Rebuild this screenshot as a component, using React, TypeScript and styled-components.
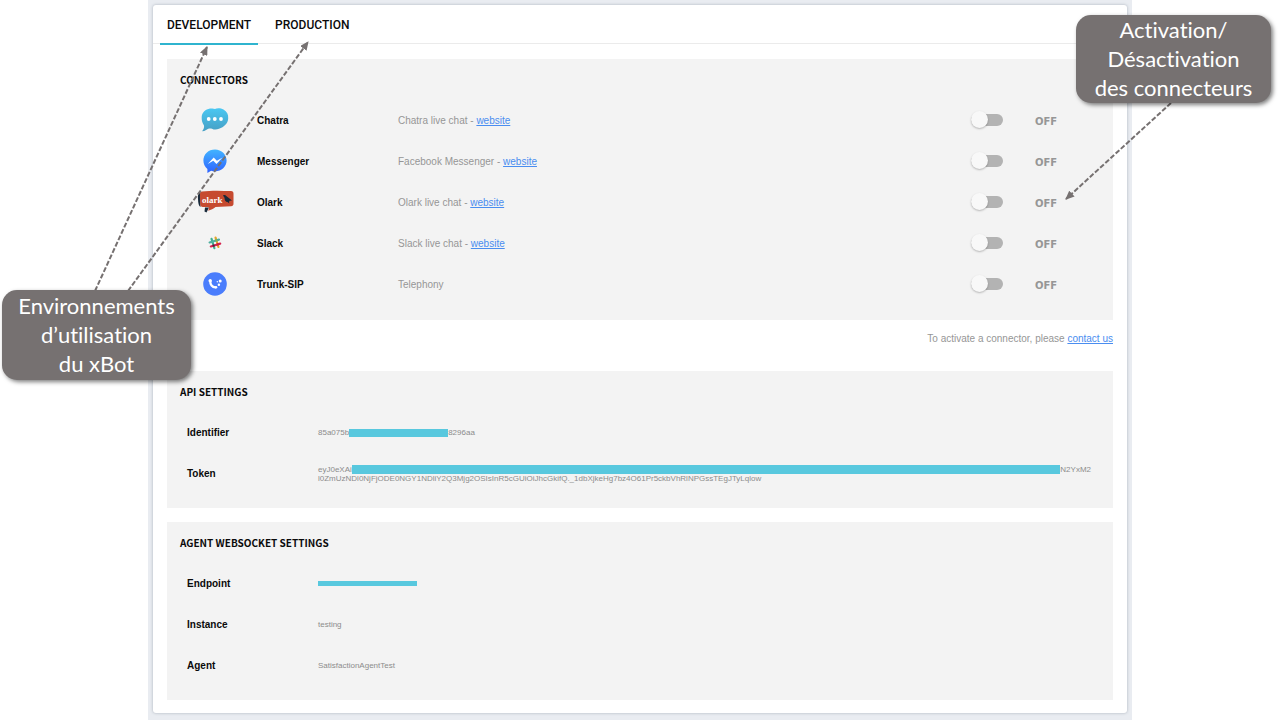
import React from 'react';
import styled, { createGlobalStyle } from 'styled-components';

const GlobalStyle = createGlobalStyle`
  *, *::before, *::after { box-sizing: border-box; }
  body {
    margin: 0;
    background: #fff;
    color: #0a0a0a;
    font-family: "Liberation Sans", Arial, sans-serif;
    font-size: 10px;
  }
`;

const Page = styled.div`
  position: relative;
  min-height: 100vh;
  padding: 0 148px;
`;

const Backdrop = styled.div`
  min-height: 100vh;
  padding: 5px 5px 7px;
  background: #e9ecf1;
`;

const Card = styled.main`
  background: #fff;
  border-radius: 3px;
  box-shadow: 0 0 3px rgba(90, 105, 125, 0.45);
`;

const Tabs = styled.nav`
  display: flex;
  gap: 10px;
  height: 39px;
  padding: 0 7px;
  border-bottom: 1px solid #ebebeb;
`;

const Tab = styled.button<{ $active?: boolean }>`
  height: 40px;
  padding: 2px 7px 0;
  border: 0;
  border-bottom: 2px solid ${(p) => (p.$active ? '#2fb4cf' : 'transparent')};
  background: none;
  color: #0a0a0a;
  font: 500 12px/36px Roboto, sans-serif;
`;

const Content = styled.div`
  display: flex;
  flex-direction: column;
  gap: 14px;
  padding: 15px 14px 13px;
`;

const Panel = styled.section`
  padding-bottom: 14px;
  background: #f3f3f3;
`;

const PanelTitle = styled.h2`
  margin: 0;
  padding-left: 13px;
  font: 700 10px/41px "Noto Sans CJK SC", "Noto Sans", sans-serif;
`;

const ConnectorList = styled.ul`
  margin: 0;
  padding: 0 0 1px;
  list-style: none;
`;

const ConnectorRow = styled.li`
  display: grid;
  grid-template-columns: 90px 141px 1fr 64px 78px;
  align-items: center;
  height: 41px;
`;

const LogoCell = styled.span`
  display: flex;
  justify-content: center;
  padding: 0 0 2px 6px;
`;

const Name = styled.label`
  font-weight: 700;
`;

const Description = styled.span`
  color: #969696;
`;

const Link = styled.a`
  color: #4a8df0;
  text-decoration: underline;
`;

const Switch = styled.input`
  appearance: none;
  display: flex;
  align-items: center;
  width: 32px;
  height: 12px;
  margin: 0 0 2px;
  border-radius: 6px;
  background: #b3b3b3;

  &::before {
    content: "";
    width: 17px;
    height: 17px;
    border-radius: 50%;
    background: #f8f8f8;
    box-shadow: 0 1px 2px rgba(0, 0, 0, 0.25);
  }

  &:checked { justify-content: flex-end; background: #2fb4cf; }
`;

const State = styled.span`
  padding-top: 2px;
  color: #969696;
  font: 700 10px/16px "DejaVu Sans", sans-serif;
`;

const Note = styled.p`
  margin: 0;
  color: #969696;
  line-height: 37px;
  text-align: right;
`;

const Settings = styled.dl`
  margin: 0;
`;

const SettingRow = styled.div`
  display: grid;
  grid-template-columns: 131px 1fr;
  align-items: center;
  height: 41px;
  padding: 0 22px 0 20px;
`;

const Term = styled.dt`
  font-weight: 700;
`;

const Value = styled.dd`
  margin: 0;
  color: #8c8c8c;
  font-size: 8px;
  line-height: 9px;
`;

const Line = styled.div`
  display: flex;
  align-items: center;
`;

const Mask = styled.span<{ $height: number; $fill?: boolean }>`
  flex: ${(p) => (p.$fill ? '1' : '0 0 99px')};
  height: ${(p) => p.$height}px;
  background: #58c8de;
`;

const Callout = styled.aside`
  position: absolute;
  border-radius: 15px;
  background: #767171;
  box-shadow: 2px 2px 4px rgba(0, 0, 0, 0.5);
  color: #fff;
  font: 400 22px/29px Lato, sans-serif;
  font-variant-ligatures: none;
  text-align: center;
`;

const EnvironmentCallout = styled(Callout)`
  top: 290px;
  left: 2px;
  width: 189px;
  padding: 1px 0 2px;
`;

const ActivationCallout = styled(Callout)`
  top: 15px;
  right: 9px;
  width: 195px;
  padding-bottom: 1px;
`;

const Arrows = styled.svg<{ $side: 'left' | 'right' }>`
  position: absolute;
  top: 0;
  ${(p) => p.$side}: 0;
  pointer-events: none;
`;

const ChatraLogo = () => (
  <svg width="28" height="24" viewBox="0 0 28 24" aria-hidden="true">
    <defs>
      <linearGradient id="chatra" x1="0" y1="0" x2="0" y2="1">
        <stop offset="0" stopColor="#49c7f2" />
        <stop offset="1" stopColor="#479fc4" />
      </linearGradient>
    </defs>
    <path
      d="M9 .6C11 .2 13 .4 14 .9 16 .1 20 .1 22.500 1.600 26 3.500 27.500 6.500 27.200 10.500 27 15.500 23 19 18 20.800 15.500 21.800 13 21.800 11 20.700 8.500 20.300 7 20.800 5.500 21.800 4 22.800 2.500 23.300 1 23.300 2.500 21.500 3.400 19.500 3 17.500 1 14.500 .6 12 .7 9 1 4.500 4.500 1.400 9 .6Z"
      fill="url(#chatra)"
    />
    <g fill="#fff">
      <circle cx="7.700" cy="11" r="1.900" />
      <circle cx="13.800" cy="11" r="1.900" />
      <circle cx="20" cy="11" r="1.900" />
    </g>
  </svg>
);

const MessengerLogo = () => (
  <svg width="24" height="24" viewBox="0 0 24 24" aria-hidden="true">
    <defs>
      <linearGradient id="messenger" x1="0" y1="0" x2="0" y2="1">
        <stop offset="0" stopColor="#42b4ff" />
        <stop offset="1" stopColor="#2f63ff" />
      </linearGradient>
    </defs>
    <path
      d="M12 .4C5.400 .4 .4 5.200 .4 11.600c0 3.500 1.500 6.500 4 8.500v3.800l3.700-2.100c1.200.4 2.500.6 3.900.6 6.600 0 11.600-4.800 11.600-10.800S18.600.4 12 .4Z"
      fill="url(#messenger)"
    />
    <path d="M4.700 15 10.700 8.600l3.200 3.100 5.600-3.100-6 6.400-3.200-3.200Z" fill="#fff" />
  </svg>
);

const OlarkLogo = () => (
  <svg width="37" height="23" viewBox="0 0 37 23" aria-hidden="true">
    <path d="M3.500 2C1 3 .8 5 1 9c.1 4 .8 7 2.500 8ZM8 17.500h4l-2.500 5-2-1Z" fill="#18293a" />
    <path
      d="M5 1.500C14 .3 25 .6 34 1.100c1.800.1 2.500 1 2.500 2.600v9.800c0 1.800-.8 2.700-2.500 2.800l-15.500.6c-2 1.800-4.500 3-7.500 3.800.8-1.200 1-2.500.5-3.800H6c-1.800 0-2.700-.8-2.800-2.600L3 4.300C3 2.600 3.600 1.700 5 1.500Z"
      fill="#c64a30"
    />
    <text x="5" y="13" fill="#fff" fontFamily="Liberation Serif, serif" fontSize="9" fontWeight="700">
      olark
    </text>
    <path d="M26 5.500c1.500-.8 2.600-.4 3.300.6L35 10.500l-2.500.2-.5 1.500.4 1.300-1.900-1.400c-2-.4-3-2-3-4.400Z" fill="#18293a" />
  </svg>
);

const SlackLogo = () => (
  <svg width="14" height="14" viewBox="0 0 14 14" aria-hidden="true">
    <g transform="rotate(-17 7 7)" strokeWidth="2.200" strokeLinecap="round">
      <path d="M4.900 2v9.800" stroke="#3db08f" />
      <path d="M9.100 2v9.800" stroke="#e3a62b" />
      <path d="M2 4.900h9.800" stroke="#4fae9f" />
      <path d="M2 9.100h9.800" stroke="#d6234f" />
      <path d="M4.900 9.100v.1" stroke="#45233f" />
      <path d="M9.100 9.100v.1" stroke="#c9243a" />
      <path d="M9.100 4.900v.1" stroke="#8bb04a" />
    </g>
    <path d="M6.300 6.300h1.400v1.400H6.300Z" fill="#f3f3f3" />
  </svg>
);

const TrunkLogo = () => (
  <svg width="24" height="24" viewBox="0 0 24 24" aria-hidden="true">
    <circle cx="12" cy="12" r="11.800" fill="#4a7dfc" />
    <path
      d="M7.300 9C7 12.500 9.300 15.300 12.300 15.400"
      fill="none"
      stroke="#fff"
      strokeWidth="2.200"
      strokeLinecap="round"
    />
    <circle cx="7.200" cy="8.800" r="1.700" fill="#fff" />
    <circle cx="13" cy="15.200" r="1.300" fill="#fff" />
    <circle cx="15.900" cy="12.800" r="1.200" fill="#fff" />
    <circle cx="17.200" cy="9" r="1.500" fill="#fff" />
    <circle cx="14.300" cy="9.800" r=".7" fill="#fff" />
  </svg>
);

type Connector = {
  id: string;
  name: string;
  text: string;
  site?: string;
  Logo: React.ComponentType;
};

const connectors: Connector[] = [
  { id: 'chatra', name: 'Chatra', text: 'Chatra live chat', site: '#chatra', Logo: ChatraLogo },
  { id: 'messenger', name: 'Messenger', text: 'Facebook Messenger', site: '#messenger', Logo: MessengerLogo },
  { id: 'olark', name: 'Olark', text: 'Olark live chat', site: '#olark', Logo: OlarkLogo },
  { id: 'slack', name: 'Slack', text: 'Slack live chat', site: '#slack', Logo: SlackLogo },
  { id: 'trunk', name: 'Trunk-SIP', text: 'Telephony', Logo: TrunkLogo },
];

const ArrowHead = ({ id }: { id: string }) => (
  <defs>
    <marker
      id={id}
      viewBox="0 0 9 8"
      refX="8"
      refY="4"
      markerWidth="9"
      markerHeight="8"
      markerUnits="userSpaceOnUse"
      orient="auto"
    >
      <path d="M0 0 9 4 0 8Z" fill="#767171" />
    </marker>
  </defs>
);

export default function App() {
  return (
    <>
      <GlobalStyle />
      <Page>
        <Backdrop>
          <Card>
            <Tabs>
              <Tab type="button" $active>DEVELOPMENT</Tab>
              <Tab type="button">PRODUCTION</Tab>
            </Tabs>
            <Content>
              <div>
                <Panel>
                  <PanelTitle>CONNECTORS</PanelTitle>
                  <ConnectorList>
                    {connectors.map(({ id, name, text, site, Logo }) => (
                      <ConnectorRow key={id}>
                        <LogoCell><Logo /></LogoCell>
                        <Name htmlFor={id}>{name}</Name>
                        <Description>
                          {text}
                          {site && <> - <Link href={site}>website</Link></>}
                        </Description>
                        <Switch id={id} type="checkbox" role="switch" />
                        <State>OFF</State>
                      </ConnectorRow>
                    ))}
                  </ConnectorList>
                </Panel>
                <Note>
                  To activate a connector, please <Link href="#contact">contact us</Link>
                </Note>
              </div>
              <Panel>
                <PanelTitle>API SETTINGS</PanelTitle>
                <Settings>
                  <SettingRow>
                    <Term>Identifier</Term>
                    <Value><Line>85a075b<Mask $height={8} />8296aa</Line></Value>
                  </SettingRow>
                  <SettingRow>
                    <Term>Token</Term>
                    <Value>
                      <Line>eyJ0eXAi<Mask $height={9} $fill />N2YxM2</Line>
                      <Line>l0ZmUzNDl0NjFjODE0NGY1NDliY2Q3Mjg2OSIsInR5cGUiOiJhcGkifQ._1dbXjkeHg7bz4O61Pr5ckbVhRlNPGssTEgJTyLqlow</Line>
                    </Value>
                  </SettingRow>
                </Settings>
              </Panel>
              <Panel>
                <PanelTitle>AGENT WEBSOCKET SETTINGS</PanelTitle>
                <Settings>
                  <SettingRow>
                    <Term>Endpoint</Term>
                    <Value><Line><Mask $height={5} /></Line></Value>
                  </SettingRow>
                  <SettingRow>
                    <Term>Instance</Term>
                    <Value>testing</Value>
                  </SettingRow>
                  <SettingRow>
                    <Term>Agent</Term>
                    <Value>SatisfactionAgentTest</Value>
                  </SettingRow>
                </Settings>
              </Panel>
            </Content>
          </Card>
        </Backdrop>

        <Arrows $side="left" width="320" height="300" aria-hidden="true">
          <ArrowHead id="head-left" />
          <g stroke="#767171" strokeWidth="2" strokeDasharray="5 2">
            <path d="M95 291 207 47" markerEnd="url(#head-left)" />
            <path d="M128 291 308 42" markerEnd="url(#head-left)" />
          </g>
        </Arrows>
        <Arrows $side="right" width="220" height="210" aria-hidden="true">
          <ArrowHead id="head-right" />
          <path
            d="M111 103 6 199"
            stroke="#767171"
            strokeWidth="2"
            strokeDasharray="5 2"
            markerEnd="url(#head-right)"
          />
        </Arrows>
        <EnvironmentCallout>
          Environnements<br />d’utilisation<br />du xBot
        </EnvironmentCallout>
        <ActivationCallout>
          Activation/<br />Désactivation<br />des connecteurs
        </ActivationCallout>
      </Page>
    </>
  );
}
